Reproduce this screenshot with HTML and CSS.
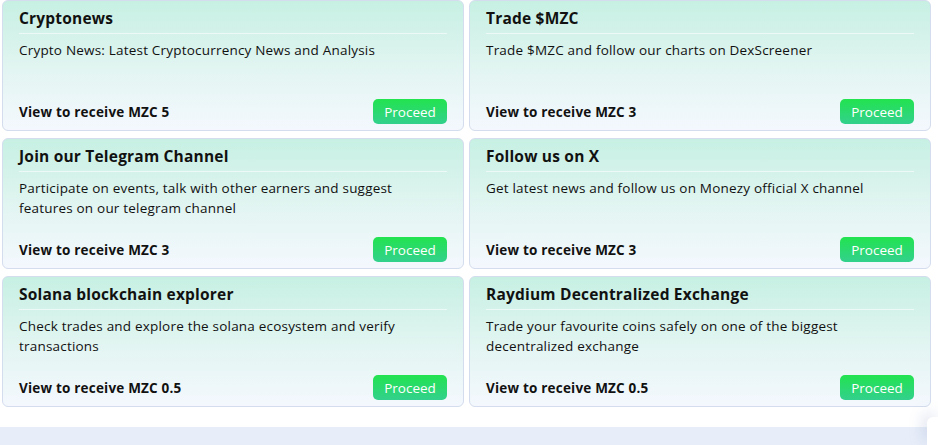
FILE: index.html
```html
<!DOCTYPE html>
<html>
<head>
<meta charset="utf-8">
<link rel="stylesheet" href="styles.css">
</head>
<body>
<div class="grid">
  <div class="card">
    <h3 class="title">Cryptonews</h3>
    <p class="desc">Crypto News: Latest Cryptocurrency News and Analysis</p>
    <div class="foot"><span class="reward">View to receive MZC 5</span><button class="btn">Proceed</button></div>
  </div>
  <div class="card">
    <h3 class="title">Trade $MZC</h3>
    <p class="desc">Trade $MZC and follow our charts on DexScreener</p>
    <div class="foot"><span class="reward">View to receive MZC 3</span><button class="btn">Proceed</button></div>
  </div>
  <div class="card">
    <h3 class="title">Join our Telegram Channel</h3>
    <p class="desc">Participate on events, talk with other earners and suggest features on our telegram channel</p>
    <div class="foot"><span class="reward">View to receive MZC 3</span><button class="btn">Proceed</button></div>
  </div>
  <div class="card">
    <h3 class="title">Follow us on X</h3>
    <p class="desc">Get latest news and follow us on Monezy official X channel</p>
    <div class="foot"><span class="reward">View to receive MZC 3</span><button class="btn">Proceed</button></div>
  </div>
  <div class="card">
    <h3 class="title">Solana blockchain explorer</h3>
    <p class="desc">Check trades and explore the solana ecosystem and verify transactions</p>
    <div class="foot"><span class="reward">View to receive MZC 0.5</span><button class="btn">Proceed</button></div>
  </div>
  <div class="card">
    <h3 class="title">Raydium Decentralized Exchange</h3>
    <p class="desc">Trade your favourite coins safely on one of the biggest decentralized exchange</p>
    <div class="foot"><span class="reward">View to receive MZC 0.5</span><button class="btn">Proceed</button></div>
  </div>
</div>
<div class="bottom">
  <div class="bar"></div>
  <div class="side"></div>
</div>
</body>
</html>
```

FILE: styles.css
```css
* { box-sizing: border-box; }
html, body { margin: 0; background: #ffffff; }
body {
  font-family: "Open Sans", "Liberation Sans", sans-serif;
  color: #111111;
  width: 938px;
  height: 445px;
  overflow: hidden;
}
.grid {
  display: grid;
  grid-template-columns: 462px 462px;
  grid-auto-rows: 131px;
  column-gap: 5px;
  row-gap: 7px;
  padding: 0 0 0 2px;
}
.card {
  display: flex;
  flex-direction: column;
  padding: 7px 16px 6px 16px;
  border: 1px solid #d3dded;
  border-radius: 6px;
  background: linear-gradient(180deg, #c7f0e3 0%, #e3f5f2 55%, #f4f8fe 100%);
}
.title {
  margin: 0;
  font-size: 15.5px;
  font-weight: 700;
  letter-spacing: 0.2px;
  line-height: 20px;
  padding-bottom: 5px;
  border-bottom: 1px solid rgba(255,255,255,0.55);
}
.desc {
  margin: 6px 0 0 0;
  font-size: 13.5px;
  line-height: 20px;
  letter-spacing: 0.2px;
  padding-right: 10px;
}
.foot {
  margin-top: auto;
  display: flex;
  align-items: center;
  justify-content: space-between;
}
.reward {
  font-size: 13.5px;
  font-weight: 700;
  letter-spacing: 0.2px;
}
.btn {
  width: 74px;
  height: 25px;
  border: none;
  border-radius: 5px;
  background: linear-gradient(180deg, #22e34f 0%, #33d08d 100%);
  color: #ffffff;
  font-family: inherit;
  font-size: 13.5px;
  padding: 0;
}
.bottom {
  margin-top: 10px;
  display: flex;
  align-items: flex-end;
  height: 28px;
}
.bar {
  width: 927px;
  height: 18px;
  background: #e8eef9;
}
.side {
  flex: 1;
  height: 28px;
  background: #ffffff;
  border-radius: 6px 0 0 0;
  box-shadow: -4px -4px 14px rgba(120,140,190,0.25);
}
```
